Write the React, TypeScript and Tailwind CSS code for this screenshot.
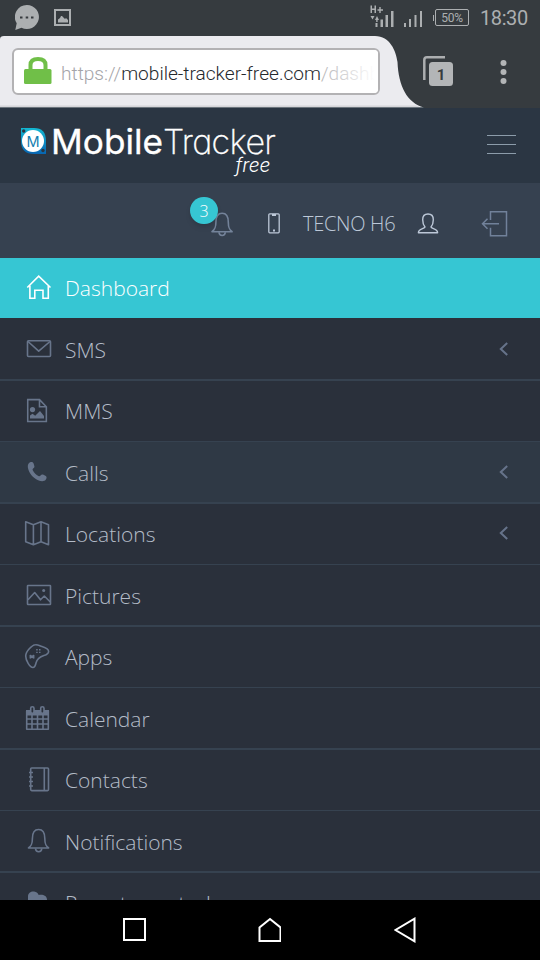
import React from "react";

type IconProps = { children: React.ReactNode; className?: string };

function MenuIcon({ children, className = "text-[#68758b]" }: IconProps) {
  return (
    <svg
      viewBox="0 0 28 28"
      className={"h-7 w-7 shrink-0 " + className}
      fill="none"
      stroke="currentColor"
      strokeWidth="1.6"
      strokeLinejoin="round"
    >
      {children}
    </svg>
  );
}

const bellPath = (
  <>
    <path d="M4.500 20c2.900-2.200 3.900-4 3.900-9.500C8.400 4.500 10.800 1.500 14.600 1.500s6.200 3 6.200 9c0 5.500.9 7.300 3.800 9.500z" />
    <path d="M11.500 20.500c.3 4.300 6 4.300 6.300 0" />
  </>
);

const icons = {
  home: (
    <path strokeLinejoin="miter" d="M3.300 13.500L14.700 2.200 26.500 13.500M5.900 11.800v12.400h4.900v-8h8.200v8h5.300V11.800" />
  ),
  mail: (
    <>
      <rect x="3.500" y="4.700" width="23" height="15.800" rx="1" />
      <path d="M4 5.500l10.700 9.700L26 5.500" />
    </>
  ),
  fileImage: (
    <>
      <path strokeLinejoin="miter" d="M3.600 2.700h12l7 7.300v15H3.600zM15.600 3v7h7" transform="translate(.2 0) scale(.98 .98)" />
      <circle cx="8.500" cy="12.600" r="2.600" fill="currentColor" stroke="none" />
      <path d="M6 21.500v-3l2.500-1.700 2.700 2L16 14l4 5v2.500z" fill="currentColor" stroke="none" />
    </>
  ),
  phone: (
    <path
      d="M6.700 3.100c1.200-.2 2.300.2 2.900 1.300l.8 2.800c.2.900-.3 1.700-1.300 2.400-.7.600-.6 1.100-.2 1.800 1.300 2.300 3.200 4.200 5.500 5.500.8.400 1.400.4 1.900-.1 1-1.200 1.900-1.700 3.200-1.100l2.300 1.200c1.200.8.900 2.600-.1 3.900-1.500 1.900-4.600 1.800-7.600.4C9 18.700 5 14.400 3.900 8.700c-.5-2.500.6-5.200 2.800-5.600z"
      fill="currentColor"
      stroke="none"
    />
  ),
  map: (
    <path d="M1.700 1.800L9.400 4.700 17 1.800l7.500 2.900v20L17 21.700l-7.600 3-7.700-3zM9.400 4.700v20M17 1.800v20" />
  ),
  picture: (
    <>
      <rect x="3.500" y="3.500" width="23" height="19" rx=".5" />
      <path d="M4 17.800l6.700-7.300 5.800 7.300 3.800-3.800 6 6" />
      <circle cx="19.700" cy="8.600" r="1.500" fill="currentColor" stroke="none" />
    </>
  ),
  gamepad: (
    <>
      <path d="M11.500 1.800c2.500-.2 4.100 1 6.500 1.700 3 .9 6.600 2 6.600 5 0 2.500-1.900 3.200-4.700 4.100-5 1.600-6.800 3.400-7.900 7.400-.7 2.500-.9 4.500-3 4.500-3.200 0-7.300-7.300-7.300-11.500C1.700 8.500 8 2 11.500 1.800z" />
      <path d="M6.300 12l3.400 3.400M9.700 12l-3.400 3.400M6.200 12v3.400M9.800 12v3.400" strokeWidth="1.300" />
      <path d="M12.200 6.800h1.500M15 6.800h1.500M12.200 9.400h1.500M15 9.400h1.500" strokeWidth="1.400" />
    </>
  ),
  calendar: (
    <>
      <path d="M2 5h23v5.500H2z" fill="currentColor" stroke="none" />
      <path d="M2.700 6v18.200h21.600V6M2.700 14h21.600M2.700 19h21.600M8 10v14M13.500 10v14M19 10v14" />
      <rect x="6.700" y="1.700" width="3.300" height="6.600" rx="1.600" fill="#2a303b" />
      <rect x="16.700" y="1.700" width="3.300" height="6.600" rx="1.600" fill="#2a303b" />
    </>
  ),
  notebook: (
    <>
      <rect x="6.700" y="2" width="17.800" height="22.600" rx="1" />
      <path d="M20.300 2v22M5 6.500h4M5 11h4M5 15.500h4M5 20h4" />
    </>
  ),
  bell: bellPath,
  cloud: (
    <path
      d="M4 13V7.500C4 3.500 8 1.800 11 2.800c2 .5 3.200 2 3.700 3.300 3.500-1.100 8.300.4 8.300 4.400V13z"
      fill="currentColor"
      stroke="none"
    />
  ),
};

type Row = {
  label: string;
  icon: keyof typeof icons;
  box: string;
  arrow?: boolean;
};

const rows: Row[] = [
  { label: "SMS", icon: "mail", box: "h-[63px] border-b-2 pt-[18px]", arrow: true },
  { label: "MMS", icon: "fileImage", box: "h-[61px] border-b pt-4" },
  { label: "Calls", icon: "phone", box: "h-[62px] border-b-2 pt-[17px] bg-[#2f3945]", arrow: true },
  { label: "Locations", icon: "map", box: "h-[61px] border-b pt-4", arrow: true },
  { label: "Pictures", icon: "picture", box: "h-[62px] border-b-2 pt-[17px]" },
  { label: "Apps", icon: "gamepad", box: "h-[61px] border-b pt-4" },
  { label: "Calendar", icon: "calendar", box: "h-[62px] border-b-2 pt-[17px]" },
  { label: "Contacts", icon: "notebook", box: "h-[61px] border-b pt-4" },
  { label: "Notifications", icon: "bell", box: "h-[62px] border-b-2 pt-[17px]" },
  { label: "Remote control", icon: "cloud", box: "h-[61px] border-b pt-4" },
];

function StatusBar() {
  return (
    <div className="flex h-9 items-start bg-[#363b3f] text-[#acafb1]">
      <svg className="ml-[15px] mt-[5px] h-[25px] w-6" viewBox="0 0 24 25">
        <path d="M12 0a12 12 0 1 1-5.500 22.700L.3 25l1.400-6.700A12 12 0 0 1 12 0z" fill="currentColor" />
        <g fill="#363b3f">
          <rect x="5" y="11.500" width="2.500" height="2" />
          <rect x="10.700" y="11.500" width="2.500" height="2" />
          <rect x="16" y="11.500" width="2.500" height="2" />
        </g>
      </svg>
      <svg className="ml-[15px] mt-[9px] h-[17px] w-[17px]" viewBox="0 0 17 17">
        <rect x="1" y="1" width="15" height="15" fill="none" stroke="currentColor" strokeWidth="2" />
        <path d="M4 13.500v-3L6 9l1-2h1l3 3 1-1 2 2v2.500z" fill="currentColor" />
      </svg>
      <svg className="ml-auto mr-[10px] mt-1 h-6 w-[30px]" viewBox="0 0 30 24" fill="currentColor">
        <path d="M.5 1.500H2v3h2.500v-3H6V9H4.500V6H2v3H.5zM9.300 3h1.400v2.300H13v1.400h-2.300V9H9.300V6.700H7.500V5.300h1.800zM.5 12h4l-2 3.500zM5 16l2-4 2 4zM5.500 19h2v4h-2zM6.200 15h1.400v3H6.200zM10.500 15.500H13V23h-2.500zM15.500 11H18v12h-2.500zM21 7h2.500v16H21z" />
      </svg>
      <svg className="-ml-[6px] mr-[11px] mt-[11px] h-4 w-[18px]" viewBox="0 0 18 16" fill="currentColor">
        <path d="M0 12h2v4H0zM5 8h2v8H5zM10.500 4h2v12h-2zM16 0h2v16h-2z" />
      </svg>
      <div className="mr-[3px] mt-[15px] h-[6px] w-px bg-[#acafb1]" />
      <div className="-ml-[2px] mt-[9px] flex h-[17px] w-[34px] items-center justify-center rounded-[2px] border border-[#acafb1] pt-px font-[Roboto,sans-serif] text-[12px] tracking-[-0.3px]">
        50%
      </div>
      <div className="ml-[11px] mr-[12px] mt-1 w-[48px] whitespace-nowrap font-[Roboto,sans-serif] text-[20px] leading-7 tracking-[-0.4px]">
        18:30
      </div>
    </div>
  );
}

function BrowserBar() {
  return (
    <div className="flex h-[72px] bg-[#363b3f]">
      <div className="relative w-[424px] shrink-0 pl-3 pt-3">
        <svg className="absolute inset-0 h-[72px] w-[424px]" viewBox="0 0 424 72">
          <path d="M0 3Q0 0 4 0H375C390 0 396 15 397.500 26C398.500 50 407 67 424 71.500H0z" fill="#ebebef" />
          <path d="M0 69.500H416Q420 71.500 424 71.500H0z" fill="#d6d6da" />
          <path d="M0 71.500H424V72H0z" fill="#293845" />
        </svg>
        <div className="relative flex h-[47px] w-[368px] items-center rounded-[6px] border-2 border-[#b3b2b4] bg-white">
          <svg className="-mt-[2px] ml-[10px] h-[27px] w-7 shrink-0" viewBox="0 0 28 27">
            <path d="M6.500 13V8q0-6 7.500-6t7.500 6v5" fill="none" stroke="#70bf48" strokeWidth="4" />
            <rect y="12" width="27.500" height="15" rx="1.500" fill="#70bf48" />
          </svg>
          <div className="ml-[9px] mt-[5px] whitespace-nowrap font-[Roboto,sans-serif] text-[19.100px] font-light leading-7 text-[#a5a5a9]">
            https://<span className="text-[#25292e]">mobile-tracker-free.com</span>
            <span>/dash</span>
            <span className="inline-block w-[5px] overflow-hidden align-bottom">b</span>
          </div>
          <div className="absolute inset-y-0 right-0 w-[56px] rounded-r-[4px] bg-linear-to-r from-white/20 via-white/60 to-white to-95%" />
        </div>
      </div>
      <svg className="-ml-[1px] mt-5 h-[30px] w-[30px]" viewBox="0 0 30 30">
        <path d="M1.300 24V4Q1.300 1.300 4 1.300H22" fill="none" stroke="#acaeb0" strokeWidth="2.500" />
        <rect x="6" y="6" width="24" height="24" rx="3.500" fill="#b3b5b7" />
        <text x="18" y="23.500" textAnchor="middle" fontFamily="Roboto" fontWeight="700" fontSize="15" fill="#363b3f">1</text>
      </svg>
      <svg className="ml-[47px] mt-6 h-6 w-[7px]" viewBox="0 0 7 24" fill="#b3b5b7">
        <circle cx="3.500" cy="3" r="3" />
        <circle cx="3.500" cy="12" r="3" />
        <circle cx="3.500" cy="21" r="3" />
      </svg>
    </div>
  );
}

function SiteHeader() {
  return (
    <header className="flex h-[75px] bg-[#2b3643]">
      <svg className="ml-[21px] mt-2.5 h-[60px] w-[264px] overflow-visible [font-feature-settings:'cv11']" viewBox="0 -10 264 60">
        <defs>
          <linearGradient id="badge" x1="0" y1="0" x2="0" y2="1">
            <stop stopColor="#13b8d2" />
            <stop offset="1" stopColor="#0866b3" />
          </linearGradient>
        </defs>
        <path d="M0 0H13Q25 0 25 13V26H13Q0 26 0 13z" fill="url(#badge)" />
        <circle cx="2.700" cy="3" r="1.700" fill="#2b3643" />
        <circle cx="22" cy="22.500" r="1.700" fill="#2b3643" />
        <circle cx="12" cy="13" r="11" fill="white" />
        <text x="12" y="18.500" textAnchor="middle" fontFamily="Inter" fontSize="14.500" fill="#157fb1">M</text>
        <g fill="white" fontFamily="Inter">
          <text x="30" y="26" fontSize="34" fontWeight="400" stroke="white" strokeWidth=".3" textLength="112" lengthAdjust="spacingAndGlyphs">Mobile</text>
          <text x="142" y="26" fontSize="34" fontWeight="200" stroke="white" strokeWidth=".3" textLength="113" lengthAdjust="spacing">Tracker</text>
          <text x="214.500" y="44" fontSize="19.500" fontStyle="italic" fontWeight="300" textLength="35" lengthAdjust="spacingAndGlyphs">free</text>
        </g>
      </svg>
      <div className="ml-auto mr-6 mt-[27px] flex h-[19px] w-[29px] flex-col justify-between">
        <span className="h-px bg-[#8c9caa]" />
        <span className="h-px bg-[#8c9caa]" />
        <span className="h-px bg-[#8c9caa]" />
      </div>
    </header>
  );
}

function AccountBar() {
  return (
    <div className="flex h-[75px] bg-[#364150]">
      <div className="relative ml-[208px] mt-7 h-7 w-7">
        <MenuIcon className="text-[#74839a]">
          <g transform="translate(-.5 .7)">{bellPath}</g>
        </MenuIcon>
        <span className="absolute -left-[18px] -top-[14px] flex h-[27px] w-7 items-center justify-center rounded-full bg-[#36c6d3] font-['Open_Sans',sans-serif] text-[16px] font-light text-white shadow-md">
          3
        </span>
      </div>
      <svg className="ml-8 mt-[30px] h-[21px] w-3" viewBox="0 0 12 21" fill="none" stroke="#bdc8d8" strokeWidth="1.300">
        <rect x=".8" y=".8" width="10.400" height="19" rx="1" />
        <path d="M4 2h4M5 17.500h2" strokeWidth="2" />
      </svg>
      <div className="ml-[23px] mt-[26px] w-[92px] whitespace-nowrap font-['Open_Sans',sans-serif] text-[20px] font-light leading-[30px] tracking-[-0.3px] text-[#bdc8d8]">
        TECNO H6
      </div>
      <svg className="ml-[22px] mt-[29px] h-[22px] w-[22px]" viewBox="0 0 22 22" fill="none" stroke="#bdc8d8" strokeWidth="1.400" strokeLinejoin="round">
        <path d="M8 15C6.700 13.500 5.700 10.500 5.700 7.700c0-3.700 1.800-5.700 5.300-5.700s5.300 2 5.300 5.700c0 2.800-1 5.800-2.300 7.300.5 2 6.600 1.500 6.600 5.700H1.400c0-4.200 6.100-3.700 6.600-5.700z" />
      </svg>
      <svg className="ml-[42px] mt-[27px] h-7 w-7" viewBox="0 0 28 28" fill="none" stroke="#71819a" strokeWidth="1.500">
        <path d="M9.500 10V1.700H25.500v24H9.500v-8M18 13.700H1.500M6.500 8.700L1.500 13.700l5 5" />
      </svg>
    </div>
  );
}

function Menu() {
  return (
    <nav className="h-[642px] overflow-hidden bg-[#2a303b] font-['Open_Sans',sans-serif] text-[21px] font-light leading-[30px] text-[#b4bcc8]">
      <div className="flex h-[60px] bg-[#36c6d3] pl-6 pt-4 text-white">
        <MenuIcon className="text-white">{icons.home}</MenuIcon>
        <span className="-mt-[1px] ml-[13px]">Dashboard</span>
      </div>
      {rows.map((row) => (
        <div key={row.label} className={"flex border-[#364250] pl-6 " + row.box}>
          <MenuIcon>{icons[row.icon]}</MenuIcon>
          <span className="-mt-[1px] ml-[13px]">{row.label}</span>
          {row.arrow && (
            <svg className="ml-auto mr-[31px] mt-[6px] h-[15px] w-[10px]" viewBox="0 0 10 15" fill="none" stroke="#66738a" strokeWidth="2">
              <path d="M8.200 1L1.800 7l6.400 6" />
            </svg>
          )}
        </div>
      ))}
    </nav>
  );
}

function NavigationBar() {
  return (
    <div className="flex h-[60px] items-center justify-between bg-black px-[122px]">
      <svg className="h-6 w-6" viewBox="0 0 24 24" fill="none" stroke="white" strokeWidth="2">
        <rect x="2" y="1" width="21" height="21" />
      </svg>
      <svg className="-ml-[2px] h-[26px] w-6" viewBox="0 0 24 26" fill="none" stroke="white" strokeWidth="2">
        <path d="M2.500 24V10.500L13 2 23.500 10.500V24z" />
      </svg>
      <svg className="h-[26px] w-6" viewBox="0 0 24 26" fill="none" stroke="white" strokeWidth="2">
        <path d="M20.500 1.700v22.600L1.500 13z" />
      </svg>
    </div>
  );
}

export default function App() {
  return (
    <div className="flex h-[960px] w-[540px] flex-col overflow-hidden bg-black">
      <StatusBar />
      <BrowserBar />
      <SiteHeader />
      <AccountBar />
      <Menu />
      <NavigationBar />
    </div>
  );
}
